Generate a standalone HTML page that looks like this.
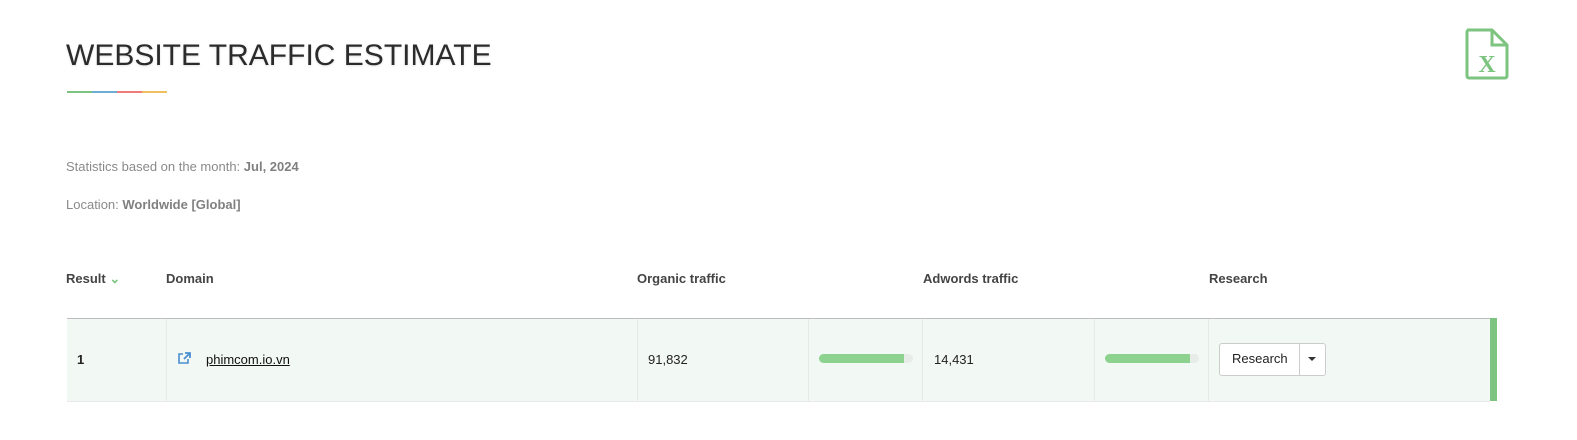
<!DOCTYPE html>
<html><head><style>
body{margin:0;width:1577px;height:440px;background:#fff;font-family:"Liberation Sans",Arial,sans-serif;position:relative;overflow:hidden}
.a{position:absolute}
h1{position:absolute;left:66px;top:39px;margin:0;font-weight:normal;font-size:30px;color:#2b2b2b;letter-spacing:0;text-shadow:0 1px 2px rgba(0,0,0,.12)}
.ul{position:absolute;top:91px;height:2px;width:25px}
.info{position:absolute;left:66px;font-size:13px;color:#8a8a8a}
.info b{color:#808080}
.th{position:absolute;top:271px;font-size:13px;font-weight:bold;color:#444}
.row{position:absolute;left:67px;top:318px;width:1423px;height:82px;background:#f2f8f4;border-top:1px solid #bdbdbd;border-bottom:1px solid #e8e8e8}
.vl{position:absolute;top:319px;height:82px;width:1px;background:#e6ebe7}
.td{position:absolute;top:352px;font-size:13px;color:#222}
.bar{position:absolute;top:354px;width:94px;height:9px;border-radius:5px;background:#e8ece9}
.bar i{display:block;height:9px;border-radius:5px 0 0 5px;background:#8dd38f}
</style></head><body>
<h1>WEBSITE TRAFFIC ESTIMATE</h1>
<div class="ul" style="left:67px;background:#7cc47f"></div>
<div class="ul" style="left:92px;background:#6baed6"></div>
<div class="ul" style="left:117px;background:#f07b7b"></div>
<div class="ul" style="left:142px;background:#f0c060"></div>
<svg class="a" style="left:1464px;top:28px" width="46" height="52" viewBox="0 0 46 52">
<path d="M3 2H28L43 17V48a2 2 0 0 1-2 2H5a2 2 0 0 1-2-2V4a2 2 0 0 1 2-2z" fill="none" stroke="#7cc47f" stroke-width="3"/>
<path d="M28 2V17H43" fill="none" stroke="#7cc47f" stroke-width="3"/>
<text x="23" y="44" text-anchor="middle" font-family="Liberation Serif,serif" font-weight="bold" font-size="24" fill="#7cc47f">X</text>
</svg>
<div class="info" style="top:159px">Statistics based on the month: <b>Jul, 2024</b></div>
<div class="info" style="top:197px">Location: <b>Worldwide [Global]</b></div>
<div class="th" style="left:66px">Result <span style="color:#7cc47f">&#8964;</span></div>
<div class="th" style="left:166px">Domain</div>
<div class="th" style="left:637px">Organic traffic</div>
<div class="th" style="left:923px">Adwords traffic</div>
<div class="th" style="left:1209px">Research</div>
<div class="row"></div>
<div class="a" style="left:1490px;top:318px;width:7px;height:83px;background:#7cc47f"></div>
<div class="vl" style="left:166px"></div><div class="vl" style="left:637px"></div><div class="vl" style="left:808px"></div><div class="vl" style="left:922px"></div><div class="vl" style="left:1094px"></div><div class="vl" style="left:1208px"></div>
<div class="td" style="left:77px;font-weight:bold">1</div>
<svg class="a" style="left:177px;top:352px" width="14" height="13" viewBox="0 0 14 13"><path d="M6 2H2V11H11V7" fill="none" stroke="#4a8fd0" stroke-width="1.6"/><path d="M7 7L12 2M8 1H13V6" fill="none" stroke="#4a8fd0" stroke-width="1.8"/></svg>
<div class="td" style="left:206px;text-decoration:underline;color:#111">phimcom.io.vn</div>
<div class="td" style="left:648px">91,832</div>
<div class="bar" style="left:819px"><i style="width:85px"></i></div>
<div class="td" style="left:934px">14,431</div>
<div class="bar" style="left:1105px"><i style="width:85px"></i></div>
<div class="a" style="left:1219px;top:343px;width:105px;height:31px;border:1px solid #ccc;border-radius:3px;background:#fff"></div>
<div class="a" style="left:1299px;top:344px;width:1px;height:31px;background:#ccc"></div>
<div class="td" style="left:1232px;top:351px">Research</div>
<div class="a" style="left:1308px;top:357px;width:0;height:0;border-left:4px solid transparent;border-right:4px solid transparent;border-top:4px solid #333"></div>
</body></html>
